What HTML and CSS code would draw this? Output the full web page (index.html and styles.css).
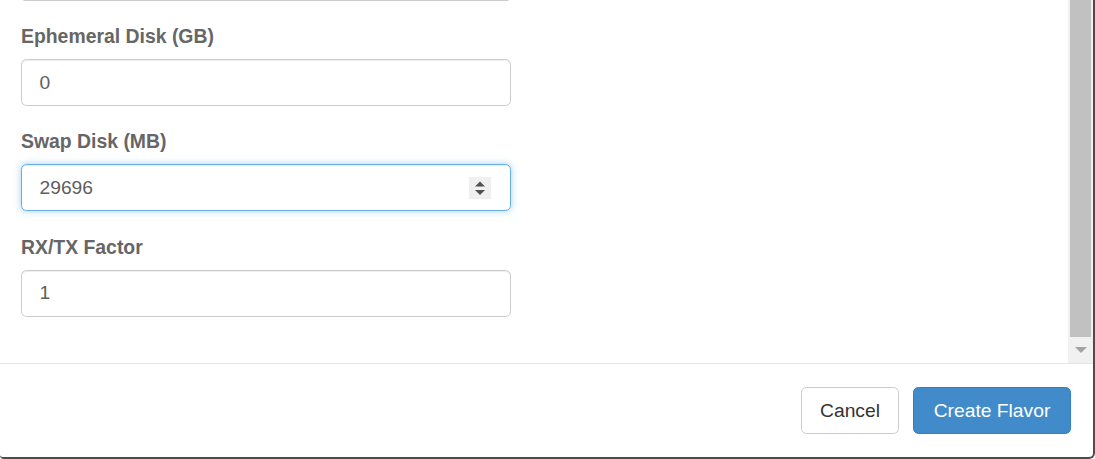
FILE: index.html
```html
<!DOCTYPE html>
<html lang="en">
  <head>
    <meta charset="UTF-8" />
    <title>Create Flavor</title>
    <link rel="stylesheet" href="styles.css">
  </head>
  <body>
    <div class="modal">
      <div class="modal-main">
        <div class="modal-body">
          <!-- tail of the field above, scrolled out of view -->
          <div class="input-tail"></div>

          <div class="form-group">
            <label for="ephemeral">Ephemeral Disk (GB)</label>
            <input id="ephemeral" class="form-control" type="text" value="0">
          </div>

          <div class="form-group">
            <label for="swap">Swap Disk (MB)</label>
            <div class="spin-wrap">
              <input id="swap" class="form-control focused" type="text" value="29696">
              <span class="spinner">
                <svg width="22" height="22" viewBox="0 0 22 22">
                  <path d="M6 9.5 L11 4.5 L16 9.5 Z" fill="#505050" />
                  <path d="M6 13 L11 18 L16 13 Z" fill="#505050" />
                </svg>
              </span>
            </div>
          </div>

          <div class="form-group">
            <label for="rxtx">RX/TX Factor</label>
            <input id="rxtx" class="form-control" type="text" value="1">
          </div>
        </div>

        <div class="scrollbar">
          <div class="scroll-thumb"></div>
          <div class="scroll-down">
            <svg width="12" height="8" viewBox="0 0 12 8">
              <path d="M0 1 L12 1 L6 7 Z" fill="#a3a3a3" />
            </svg>
          </div>
        </div>
      </div>

      <div class="modal-footer">
        <button class="btn btn-default" type="button">Cancel</button>
        <button class="btn btn-primary" type="button">Create Flavor</button>
      </div>
    </div>
  </body>
</html>
```

FILE: styles.css
```css
html,
body {
  margin: 0;
  padding: 0;
  background-color: #fff;
}
body {
  font-family: "Liberation Sans", Arial, sans-serif;
  font-size: 19.25px;
  color: #333;
}
.modal {
  width: 1095px;
  height: 459px;
  box-sizing: border-box;
  border-right: 2px solid #4c4c4c;
  border-bottom: 2px solid #4c4c4c;
  border-bottom-right-radius: 6px;
  border-bottom-left-radius: 4px;
  background-color: #fff;
  display: flex;
  flex-direction: column;
  overflow: hidden;
}
.modal-main {
  height: 363px;
  display: flex;
  border-bottom: 1px solid #e5e5e5;
}
.modal-body {
  flex: 1;
  padding: 0 21px;
  overflow: hidden;
}
.input-tail {
  width: 490px;
  height: 8px;
  margin-top: -7px;
  box-sizing: border-box;
  border: 1px solid #ccc;
  border-radius: 5.5px;
}
.form-group {
  margin-top: 22px;
}
.form-group + .form-group {
  margin-top: 22.4px;
}
label {
  display: block;
  font-weight: bold;
  font-size: 19.4px;
  color: #666;
  line-height: 27.5px;
  margin-bottom: 8.5px;
}
.form-control {
  display: block;
  width: 490px;
  height: 47px;
  box-sizing: border-box;
  padding: 0 17.5px;
  border: 1px solid #ccc;
  border-radius: 5.5px;
  font-family: "Liberation Sans", Arial, sans-serif;
  font-size: 19.25px;
  color: #5e5e5e;
  background-color: #fff;
  box-shadow: inset 0 1px 1px rgba(0, 0, 0, 0.075);
  outline: none;
}
.form-control.focused {
  border-color: #66afe9;
  box-shadow: inset 0 1px 1px rgba(0, 0, 0, 0.075), 0 0 7px rgba(102, 175, 233, 0.6);
}
.spin-wrap {
  position: relative;
  width: 490px;
}
.spinner {
  position: absolute;
  top: 12.5px;
  left: 448px;
  width: 22px;
  height: 22px;
  background-color: #f0f0f0;
}
.spinner svg {
  display: block;
}
.scrollbar {
  width: 25px;
  background-color: #f1f1f1;
  display: flex;
  flex-direction: column;
}
.scroll-thumb {
  height: 337px;
  margin: 0 2px;
  background-color: #c1c1c1;
}
.scroll-down {
  flex: 1;
  display: flex;
  align-items: center;
  justify-content: center;
}
.scroll-down svg {
  display: block;
  margin-top: -1px;
}
.modal-footer {
  flex: 1;
  display: flex;
  justify-content: flex-end;
  align-items: center;
  gap: 14px;
  padding: 0 22px 0 0;
}
.btn {
  height: 47px;
  box-sizing: border-box;
  padding: 0 18px;
  border: 1px solid #ccc;
  border-radius: 5.5px;
  font-family: "Liberation Sans", Arial, sans-serif;
  font-size: 19.25px;
  line-height: 1;
}
.btn-default {
  width: 98px;
  background-color: #fff;
  color: #333;
}
.btn-primary {
  width: 158px;
  background-color: #428bca;
  border-color: #357ebd;
  color: #fff;
}
```
